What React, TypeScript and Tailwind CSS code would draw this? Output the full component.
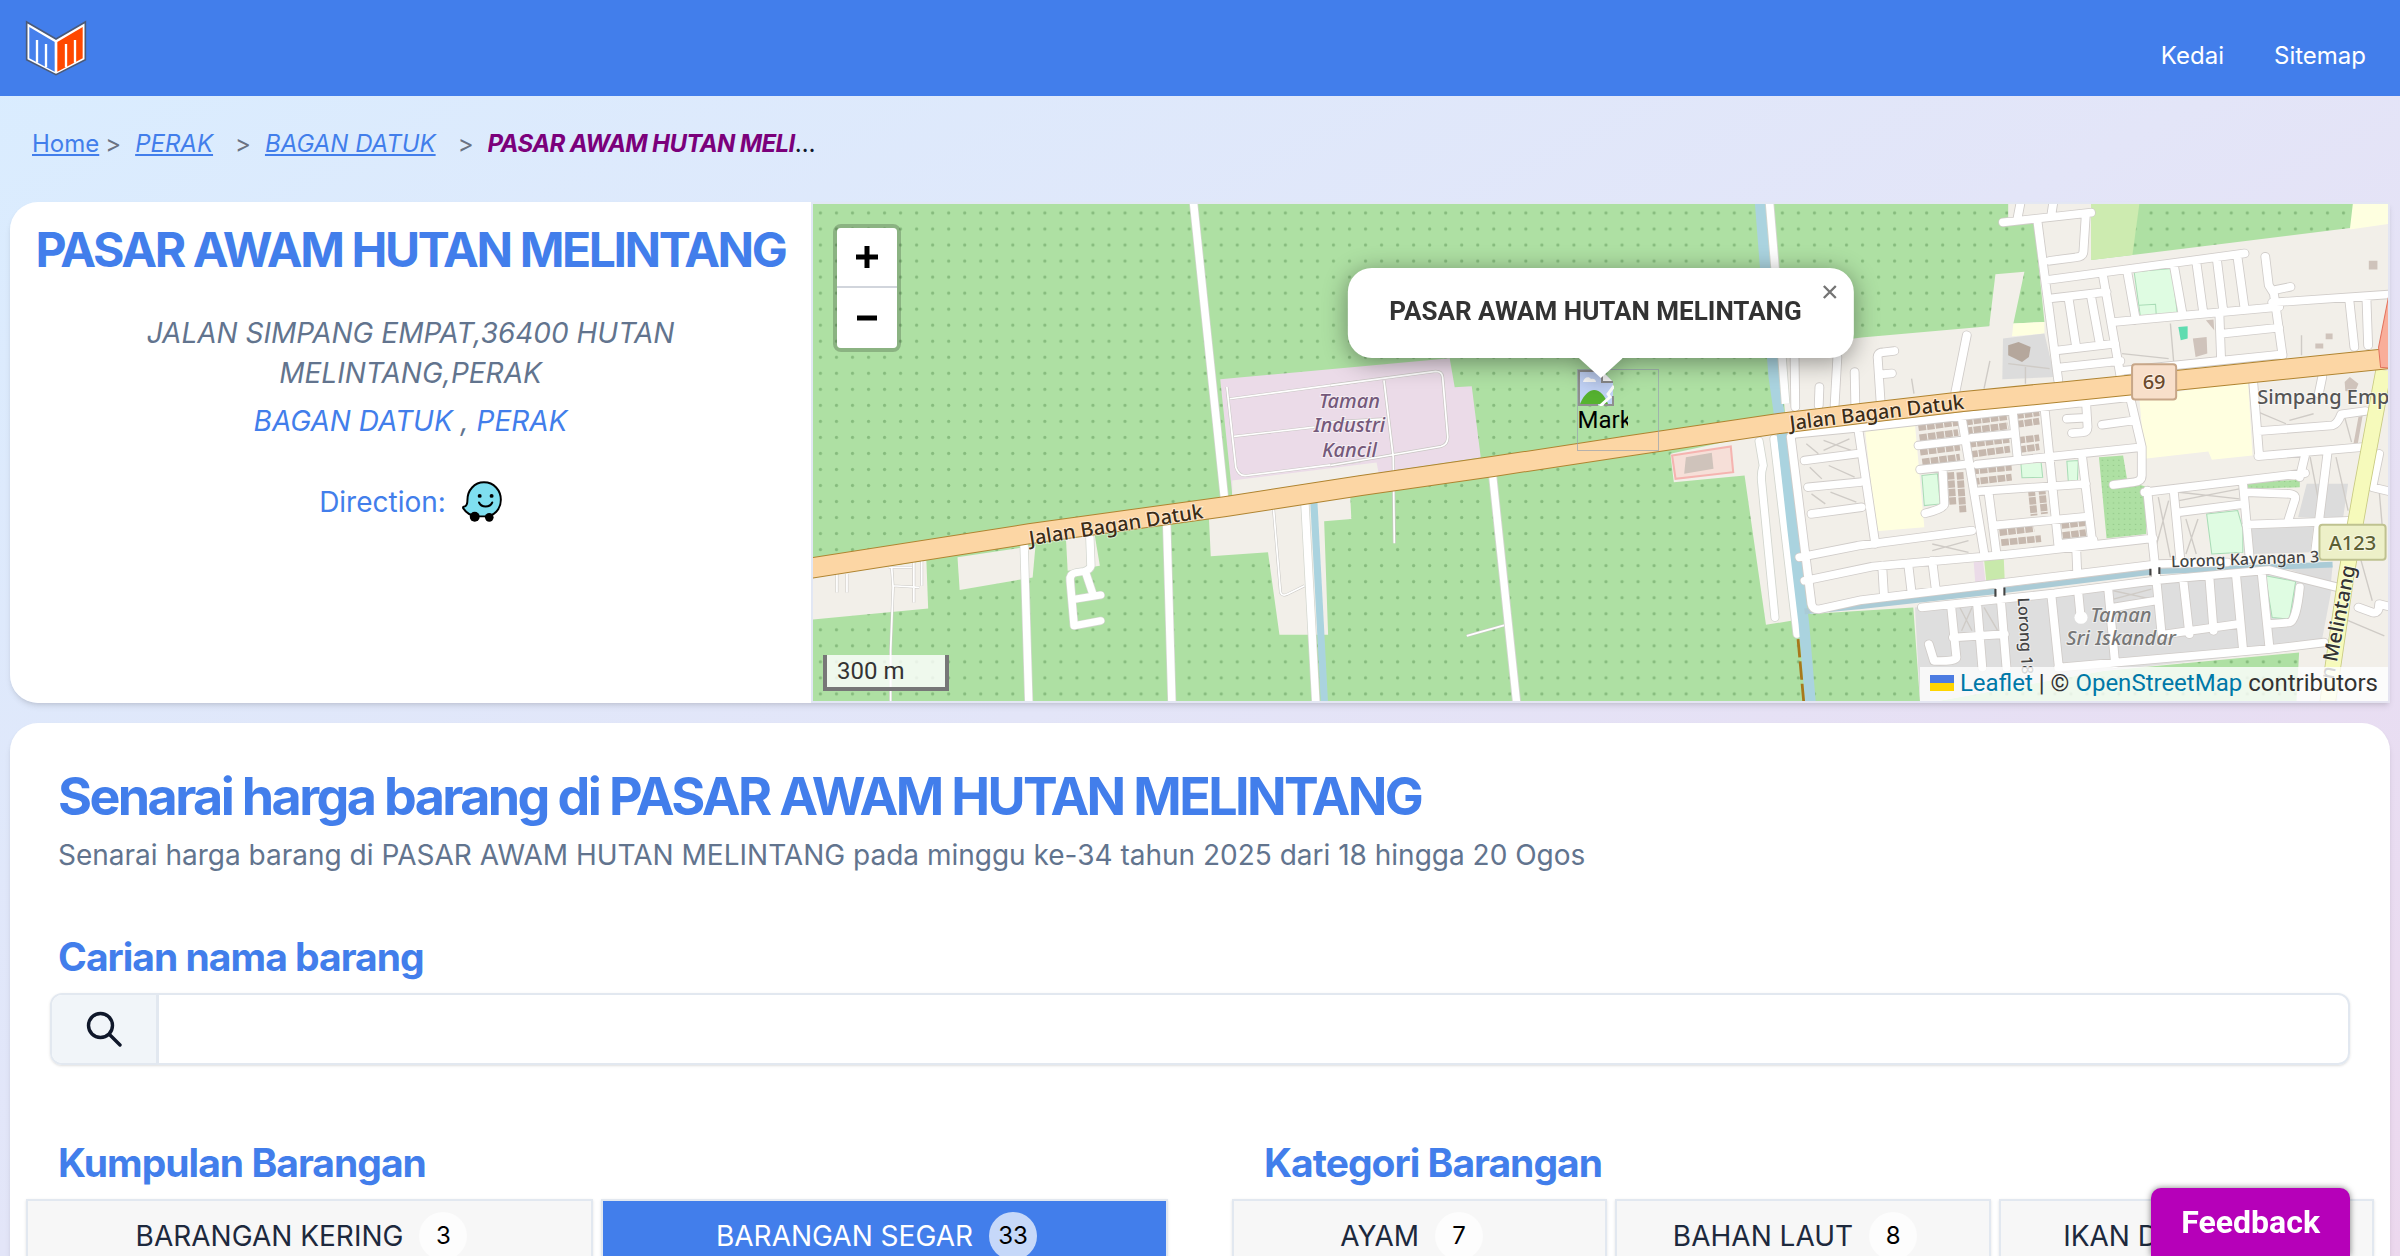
import React, { useState } from 'react';

type Tab = { label: string; count: number };

const groups: Tab[] = [
  { label: 'BARANGAN KERING', count: 3 },
  { label: 'BARANGAN SEGAR', count: 33 },
];

const categories: Tab[] = [
  { label: 'AYAM', count: 7 },
  { label: 'BAHAN LAUT', count: 8 },
  { label: 'IKAN DARAT', count: 4 },
];

function Logo() {
  return (
    <svg viewBox="0 0 270 216" className="h-[72px] w-[90px]" aria-hidden="true">
      <path d="M50 30 L138 81 L226 30 V143 L138 188 L50 143 Z" fill="#fff" stroke="#4b5a78" strokeWidth="5" />
      <path d="M58 45 L134 90 V179 L58 139 Z" fill="#4680ec" />
      <path d="M218 45 L142 90 V179 L218 139 Z" fill="#ff4800" />
      <path d="M81 152 V84 M108 166 V96" stroke="#fff" strokeWidth="7" fill="none" />
      <path d="M168 166 V96 M195 152 V84" stroke="#fff" strokeWidth="7" fill="none" />
    </svg>
  );
}

function WazeIcon() {
  return (
    <svg viewBox="0 0 120 124" className="h-[41px] w-10" aria-hidden="true">
      <path
        d="M66 4 C96 4 117 28 117 57 C117 86 96 107 68 107 H46 C28 106 12 96 3 82 C2 79 4 77 7 77 C15 76 16 69 16 57 C16 28 37 4 66 4 Z"
        fill="#7fdff0"
        stroke="#000"
        strokeWidth="6"
      />
      <circle cx="38" cy="108" r="15" />
      <circle cx="82" cy="110" r="13" />
      <circle cx="53" cy="45" r="6" />
      <circle cx="89" cy="45" r="6" />
      <path d="M51 65 C58 81 84 81 91 65" fill="none" stroke="#000" strokeWidth="6" strokeLinecap="round" />
    </svg>
  );
}

function BrokenImage() {
  return (
    <svg viewBox="0 0 36 36" className="h-9 w-9" aria-hidden="true">
      <path d="M1 1 H24 L35 12 V35 H1 Z" fill="#c3d4f8" />
      <path d="M5 12 C6 7 11 6 13 9 C16 8 18 10 18 12 Z" fill="#fff" />
      <path d="M2 34 C6 24 12 20 16 20 C22 20 27 26 30 34 Z" fill="#56b32f" />
      <path d="M24 1 V12 H35" fill="#fff" stroke="#8f8f8f" strokeWidth="2" />
      <path d="M24 1 H1 V35 H20 M26 35 H35 V26" fill="none" stroke="#8f8f8f" strokeWidth="2" />
      <path d="M36 16 L30 24 L32 27 L22 36" fill="none" stroke="#fff" strokeWidth="3" />
    </svg>
  );
}

// street grid of the town, drawn twice: casing first, then the white fill
const townStreets = [
  'M510 95 L570 570 M410 97 L665 68 M460 42 L452 85 M555 42 L550 75 M650 72 L643 185 Q642 200 620 202 L545 212',
  'M535 270 L1110 190 M700 258 L750 555 M545 325 L710 305 M600 325 L622 470 M665 318 L690 458 M570 480 L735 460',
  'M570 532 L750 512 M770 245 L795 390 M735 395 L1210 350 M1090 205 L1110 355 M905 225 L930 370 M970 215 L990 365',
  'M1030 210 L1048 360 M1037 370 L1042 510 M750 542 L1220 492 M1170 200 L1180 285 L1195 310 L1220 495 M1195 300 L1243 290',
  'M1190 337 L1540 312 M1045 430 L1210 412 M1413 325 L1428 470 M1463 320 L1468 465 M305 435 L272 605',
  'M55 630 L47 505 Q44 487 62 486 L95 482 M55 552 L88 549 M-194 500 L-192 650 M-70 500 L-78 645 M-122 590 L-124 645 M-20 545 L-18 640',
  'M-205 740 L-145 1240 Q-142 1256 -125 1256 L0 1228 L400 1178 L860 1120 L1060 1115',
  'M-190 730 L-10 712 L780 620 M-10 712 L40 1060 M290 680 L355 1085 M438 660 L452 800 M530 650 L570 1060 L672 1048',
  'M165 765 L290 750 M170 837 L300 822 M320 742 L440 730 M335 822 L795 772 M-10 1065 L320 1020 M-180 1100 L-10 1065',
  'M-165 1170 L30 1128 L420 1092 L845 1043 M368 905 L390 1082 M340 902 L650 880 M380 1005 L655 978 M640 805 L668 1050',
  'M235 835 L240 940 Q240 955 185 968 M60 1125 L65 1215 M135 1118 L145 1205 M205 1110 L215 1195 M622 1070 L625 1145',
  'M-165 810 L-15 790 M-155 890 L-5 875 M-145 970 L0 950',
  'M778 620 L812 770 L812 855 Q812 872 790 875 L730 883 M650 625 L655 710 Q655 725 640 726 L610 728 M595 685 L650 682 M697 703 L790 690',
  'M1135 575 L1152 795 M820 905 L1285 848 M1150 797 L1450 770 M1150 722 L1365 705 Q1380 700 1390 672 L1460 662 M1335 560 L1325 610',
  'M828 900 L850 1120 L870 1335 M905 905 L925 1120 M920 965 L1110 940 M1105 875 L1125 1105 M1115 905 L1240 910 Q1262 912 1255 930 L1235 995 M1115 1002 L1430 990',
  'M1285 795 L1270 860 M1350 790 L1315 1080 M1500 790 L1480 890 L1540 905 M1440 1250 L1480 1265 Q1500 1270 1500 1240 L1540 1250',
  'M175 1250 L560 1208 L860 1168 L1180 1138 L1380 1190 M260 1250 L275 1400 Q275 1412 210 1410 L195 1360 M335 1240 L350 1430 M400 1180 L420 1430',
  'M550 1212 L572 1430 M628 1205 L635 1280 M715 1195 L735 1420 M932 1165 L950 1330 M1008 1160 L1020 1320 M1085 1150 L1105 1370 M1160 1150 L1182 1370',
  'M265 1340 L415 1330 M730 1250 L850 1230 M570 1430 L1180 1375 L1340 1355 M870 1332 L1090 1300 M1180 1300 L1240 1295 Q1260 1290 1270 1190',
].join(' ');

const serviceWays =
  'M145 565 L152 610 M372 512 L355 595 M425 520 L545 535 M475 530 L475 580 M895 400 L905 520 M755 490 L890 505 M1275 435 L1275 495 ' +
  'M1400 1285 L1515 1335 M205 1060 L310 1085 M205 1080 L310 1050 M920 930 L1095 895 M920 905 L1095 925 M860 920 L895 1100 M890 930 L850 1080 ' +
  'M940 985 L970 1090 M975 985 L940 1090 M1150 665 L1230 700 M1240 690 L1310 670 M1300 800 L1330 960 M1375 800 L1410 960 M1400 680 L1420 755 ' +
  'M730 1200 L840 1225 M730 1225 L840 1195 M285 1250 L320 1320 M320 1250 L290 1320 M355 1250 L395 1320 M1500 900 L1515 1080 M1445 1100 L1480 1230 ' +
  'M-160 760 L-125 790 M-110 750 L-30 780 M-110 780 L-35 745 M-150 830 L-115 865 M-95 825 L-20 860 M-145 910 L-105 940 M-90 905 L-15 935';

const rowHouses =
  'M165 712 L280 696 M168 742 L280 726 M170 785 L285 770 M176 815 L285 800 M300 695 L425 678 M300 722 L425 706 M310 762 L428 747 ' +
  'M315 792 L430 776 M318 842 L435 830 M320 874 L435 860 M448 676 L515 667 M448 702 L515 692 M452 750 L515 742 M455 778 L515 769 ' +
  'M400 1026 L500 1014 M405 1056 L520 1044 M555 1008 L648 996 M558 1038 L650 1026 M258 845 L265 945 M285 845 L294 965 M492 895 L500 975 M522 890 L530 970';

const trunkRoad = 'M-10 365 L219 329 L414 302 L549 281 L681 262 L819 241 L967 219 L1049 209 L1152 197 L1245 188 L1393 173 L1577 154';

function MapCanvas() {
  return (
    <svg viewBox="0 0 1577 496" preserveAspectRatio="xMidYMid slice" className="block h-full w-full" role="img" aria-label="Map">
      <defs>
        <pattern id="orchard" width="16" height="16" patternUnits="userSpaceOnUse">
          <rect width="16" height="16" fill="#aee0a3" />
          <circle cx="10" cy="9" r="1.6" fill="#86bb7d" />
        </pattern>
      </defs>
      <rect width="1577" height="496" fill="url(#orchard)" />

      {/* industrial estate */}
      <path d="M409 175 L638 154 L643 183 L660 182 L669 253 L421 290 Z" fill="#ebdbe8" />
      <path d="M421 276 L565 258 L567 268 L421 291 Z" fill="#f2efe9" />

      {/* west */}
      <g transform="translate(-11 -14) scale(.357 .3333)">
        <g fill="#f2efe9">
          <path d="M0 1165 L355 1110 L360 1253 L0 1290 Z" />
          <path d="M442 1100 L660 1065 L652 1160 L448 1198 Z" />
          <path d="M745 1040 L825 1030 L840 1125 L750 1140 Z" />
          <path d="M1145 985 L1400 940 L1540 920 L1543 985 L1467 992 L1478 1332 L1342 1332 L1310 1085 L1150 1097 Z" />
        </g>
        <path d="M1438 930 L1468 1540" stroke="#aad3df" strokeWidth="20" />
        <g fill="none" stroke="#c9c7c4" strokeWidth="8">
          <path d="M250 1130 H315 M258 1130 L262 1190 L255 1380 V1540 M262 1185 L335 1190 M320 1115 V1235 M342 1110 V1185 M105 1150 V1205 M133 1150 V1205" />
          <path d="M1325 950 L1345 1205 Q1350 1218 1365 1210 L1412 1185 M1195 590 L1220 830 Q1228 858 1250 855 L1568 812 M1203 625 L1568 573 M1215 738 L1440 710" />
        </g>
        <g fill="none" stroke="#fff" strokeWidth="5">
          <path d="M250 1130 H315 M258 1130 L262 1190 L255 1380 V1540 M262 1185 L335 1190 M320 1115 V1235 M342 1110 V1185 M105 1150 V1205 M133 1150 V1205" />
          <path d="M1325 950 L1345 1205 Q1350 1218 1365 1210 L1412 1185 M1195 590 L1220 830 Q1228 858 1250 855 L1568 812 M1203 625 L1568 573 M1215 738 L1440 710" />
        </g>
        <g fill="none" strokeLinecap="round" strokeLinejoin="round">
          {['#d3d6cf', '#fff'].map((stroke, i) => (
            <g key={stroke} stroke={stroke} strokeWidth={i === 0 ? 25 : 21}>
              <path d="M1100 20 L1188 920 M628 1060 L642 1560 M1027 1005 L1042 1560 M1413 935 L1445 1560" />
              <path d="M812 1040 L815 1125 Q812 1138 795 1142 L772 1146 Q755 1150 757 1170 L768 1305 L842 1290 M800 1145 L822 1215 M765 1226 L842 1213" />
            </g>
          ))}
        </g>
      </g>

      {/* centre */}
      <g transform="translate(519 -14) scale(.3444 .3333)">
        <path d="M985 790 L1250 730 L1300 730 L1335 1290 L1262 1302 L1200 855 L995 875 Z" fill="#f2efe9" />
        <path d="M990 795 L1160 768 L1167 845 L1000 865 Z" fill="#f6dfd8" stroke="#f5b4b0" strokeWidth="6" />
        <path d="M1030 800 L1105 787 L1110 835 L1025 850 Z" fill="#cfc3bb" />
        <g fill="none" strokeLinejoin="round">
          {['#c9c7c4', '#fff'].map((stroke, i) => (
            <path
              key={stroke}
              stroke={stroke}
              strokeWidth={i === 0 ? 9 : 5}
              d="M0 585 L305 543 Q323 543 325 560 L340 740 Q340 763 320 768 L0 825 M155 570 L182 800 L185 1058 M0 695 L160 685 M395 1335 L505 1303"
            />
          ))}
        </g>
        <g fill="none" strokeLinecap="round">
          {['#d3d6cf', '#fff'].map((stroke, i) => (
            <g key={stroke} stroke={stroke} strokeWidth={i === 0 ? 26 : 21}>
              <path d="M470 855 L542 1560 M1242 752 L1254 825 Q1246 850 1250 880 L1288 1280 M1285 745 L1352 1330" />
            </g>
          ))}
        </g>
      </g>

      {/* town */}
      <g transform="translate(1049 -14) scale(.3444 .3333)">
        <path
          d="M-239 475 L0 442 L370 408 L388 252 L472 245 L440 400 L530 395 L500 90 L425 90 L425 42 L665 42 L665 210 L785 195 L1540 98 V1540 H1260 L1268 1385 L700 1440 L170 1540 L150 1250 L-150 1270 L-215 740 Z"
          fill="#f2efe9"
        />
        <path d="M665 42 L805 42 L785 195 L665 210 Z" fill="#cdebb0" />
        <path d="M440 400 L530 395 V430 L436 438 Z M1425 30 H1540 V100 L1415 118 Z" fill="#feffe0" />
        <path d="M155 1250 L860 1170 L1200 1130 L1365 1180 L1330 1370 L700 1440 L170 1540 Z" fill="#dedede" />
        <path d="M410 445 L530 430 L560 560 L408 567 Z M1128 1010 L1310 1005 L1300 1085 L1135 1090 Z M1290 880 L1410 880 L1395 985 L1265 980 Z M1220 1130 L1365 1125 L1360 1178 Z" fill="#dcdcdc" />
        <path d="M425 465 L455 455 L490 470 L485 500 L465 515 L425 495 Z" fill="#b5a79c" />
        <path d="M10 715 L155 703 L182 1010 L42 1022 Z M805 622 L1120 572 L1133 795 L1015 808 L1005 783 L820 805 Z" fill="#ffffe0" />
        <g fill="#dffce2" stroke="#a9dcb6" strokeWidth="3">
          <path d="M790 245 L900 235 L915 370 L808 378 Z M805 345 L852 342 L854 374" />
          <path d="M1000 970 L1090 960 L1105 1015 V1085 L1015 1090 Z M1170 1155 L1258 1172 L1240 1285 L1190 1280 Z" />
          <path d="M175 855 L220 850 L228 940 L182 945 Z M462 820 L520 812 L525 860 L465 862 Z M595 812 L628 810 L625 885 L600 885 Z" />
        </g>
        <path d="M688 800 L758 795 L770 870 L822 888 L825 1030 L710 1043 Z M1115 875 L1270 868 V890 L1120 895 Z" fill="url(#orchard)" />
        <path d="M355 1105 L412 1100 L415 1170 L362 1175 Z" fill="#c8e9ab" />
        <path d="M325 1115 L352 1112 L360 1180 L330 1180 Z" fill="#ebdbe8" />
        <path d="M918 410 L945 408 V445 L925 450 Z" fill="#5fdcb0" />
        <path d="M960 445 L1000 440 L1002 490 L968 500 Z M998 390 L1020 388 L1022 420 Z M1470 212 H1495 V238 H1470 Z M1345 430 H1365 V447 H1345 Z M1315 460 H1338 V475 H1315 Z M1400 575 L1415 560 L1440 580 L1430 605 L1402 602 Z M1440 680 L1452 676 L1438 760 L1426 758 Z" fill="#cfc3bb" />

        {/* canal */}
        <path d="M-295 20 L-254 560 L-229 740 L-199 1020 L-167 1300 L-146 1560" fill="none" stroke="#aad3df" strokeWidth="31" />
        <path d="M-165 1262 L0 1246 L385 1202 L850 1142 L1365 1122" fill="none" stroke="#aacbd6" strokeWidth="17" />
        <path d="M-268 20 L-250 240 L-220 640" fill="none" stroke="#d3d6cf" strokeWidth="27" />
        <path d="M-268 20 L-250 240 L-220 640" fill="none" stroke="#fff" strokeWidth="22" />
        <path d="M-184 1345 L-166 1550" stroke="#a8781c" strokeWidth="8" strokeDasharray="55 12" />

        <path d={rowHouses} fill="none" stroke="#c6b8ae" strokeWidth="20" strokeDasharray="22 3" />
        <path d={serviceWays} fill="none" stroke="#cfcbc6" strokeWidth="4" />
        <path d={townStreets} fill="none" stroke="#d0ccc9" strokeWidth="28" strokeLinecap="round" strokeLinejoin="round" />
        <path d={townStreets} fill="none" stroke="#fff" strokeWidth="23" strokeLinecap="round" strokeLinejoin="round" />
        <circle cx="636" cy="1280" r="19" fill="#fff" />
        <path d="M388 1195 V1218 M414 1190 V1214 M837 1134 V1154 M863 1130 V1150" stroke="#444" strokeWidth="6" />

        {/* secondary road */}
        <path d="M1513 540 L1448 900 L1405 1150 L1350 1540" fill="none" stroke="#c9cb83" strokeWidth="48" />
        <path d="M1513 540 L1448 900 L1405 1150 L1350 1540" fill="none" stroke="#f6fabb" strokeWidth="43" />
      </g>

      <path d={trunkRoad} fill="none" stroke="#b08430" strokeWidth="21" />
      <path d={trunkRoad} fill="none" stroke="#fcd6a4" strokeWidth="19" />
      <path d="M1577 82 L1565 143 L1567 163 L1577 164 Z" fill="#f9ae9a" stroke="#e2735e" />

      <rect x="1319" y="160" width="44" height="35" rx="3" fill="#f8dfca" stroke="#c7a688" strokeWidth="2" />
      <rect x="1506" y="320" width="66" height="35" rx="3" fill="#edf0c8" stroke="#bfc290" strokeWidth="2" />

      <g className="font-['Noto_Sans',sans-serif] font-medium" stroke="#fff" strokeOpacity="0.5" strokeWidth="2" paintOrder="stroke">
        <g textAnchor="middle" fontSize="20">
          <g fill="#74597a" fontStyle="italic">
            <text x="538" y="204">Taman</text>
            <text x="538" y="228">Industri</text>
            <text x="538" y="252">Kancil</text>
          </g>
          <g fill="#777" fontStyle="italic">
            <text x="1308" y="417">Taman</text>
            <text x="1308" y="440">Sri Iskandar</text>
          </g>
          <text x="1341" y="185" fill="#6b4a2c">69</text>
          <text x="1539" y="345" fill="#5c6034">A123</text>
          <text transform="translate(306 327) rotate(-9)" fill="#3b2c17" fontSize="20">Jalan Bagan Datuk</text>
          <text transform="translate(1065 215) rotate(-7)" fill="#3b2c17" fontSize="20">Jalan Bagan Datuk</text>
          <text transform="translate(1432 360) rotate(-2)" fill="#444" fontSize="16">Lorong Kayangan 3</text>
        </g>
        <text x="1444" y="200" fill="#555" fontSize="20">Simpang Emp</text>
        <text transform="translate(1205 393) rotate(87)" fill="#444" fontSize="16">Lorong 18</text>
        <text transform="translate(1520 475) rotate(-79)" fill="#333" fontSize="20">n Melintang</text>
      </g>
    </svg>
  );
}

function MarketMap() {
  const [popupOpen, setPopupOpen] = useState<boolean>(true);

  return (
    <div className="relative min-w-0 flex-1 overflow-hidden border-2 border-slate-200/60 font-[Roboto,sans-serif]">
      <MapCanvas />

      <div className="absolute top-5 left-5 flex flex-col overflow-hidden rounded-lg border-4 border-black/20 bg-clip-padding">
        <button type="button" aria-label="Zoom in" className="flex h-15 w-15 items-center justify-center border-b-2 border-gray-300 bg-white">
          <svg viewBox="0 0 22 22" className="h-[22px] w-[22px]"><path d="M11 0 V22 M0 11 H22" stroke="#000" strokeWidth="5" /></svg>
        </button>
        <button type="button" aria-label="Zoom out" className="flex h-15 w-15 items-center justify-center bg-white">
          <svg viewBox="0 0 20 20" className="h-5 w-5"><path d="M0 10 H20" stroke="#000" strokeWidth="5" /></svg>
        </button>
      </div>

      {/* marker whose picture did not load */}
      <div className="absolute top-[165px] left-1/2 h-[82px] w-[82px] -translate-x-6 border border-gray-400/70">
        <div className="flex w-[50px] flex-col overflow-hidden text-2xl leading-7 text-black">
          <BrokenImage />
          Mark
        </div>
      </div>

      {popupOpen ? (
        <div className="absolute top-16 left-1/2 -translate-x-1/2 drop-shadow-[0_4px_12px_rgba(0,0,0,0.4)]">
          <div className="flex h-[90px] items-center rounded-3xl bg-white pr-[52px] pb-1 pl-[42px] text-[26px] font-bold whitespace-nowrap text-[#333]">
            PASAR AWAM HUTAN MELINTANG
          </div>
          <svg viewBox="0 0 44 20" className="mx-auto block h-5 w-11" aria-hidden="true"><path d="M0 0 H44 L22 20 Z" fill="#fff" /></svg>
          <button
            type="button"
            aria-label="Close popup"
            onClick={() => setPopupOpen(false)}
            className="absolute top-0 right-0 flex h-12 w-12 items-center justify-center"
          >
            <svg viewBox="0 0 14 14" className="h-3.5 w-3.5"><path d="M1 1 L13 13 M13 1 L1 13" stroke="#757575" strokeWidth="2.4" /></svg>
          </button>
        </div>
      ) : null}

      <div className="absolute bottom-2.5 left-2.5 h-9 w-[126px] border-4 border-t-0 border-[#777] bg-white/80 pl-2.5 text-2xl leading-8 text-[#333]">300 m</div>

      <div className="absolute right-0 bottom-0 flex h-[34px] items-center bg-white/80 px-2.5 pb-0.5 text-2xl text-[#333]">
        <svg viewBox="0 0 24 16" className="mr-1.5 h-4 w-6" aria-hidden="true">
          <path d="M0 0 H24 V8 H0 Z" fill="#4c7be1" />
          <path d="M0 8 H24 V16 H0 Z" fill="#ffd500" />
        </svg>
        <p className="whitespace-pre">
          <a href="#leaflet" className="text-[#0078a8]">Leaflet</a> | © <a href="#osm" className="text-[#0078a8]">OpenStreetMap</a> contributors
        </p>
      </div>
    </div>
  );
}

function TabList({ title, tabs, active, onSelect, columns }: {
  title: string;
  tabs: Tab[];
  active?: string;
  onSelect: (label: string) => void;
  columns: string;
}) {
  return (
    <section>
      <h3 className="px-8 text-[39px] leading-[56px] font-bold tracking-tight text-[#427eeb]">{title}</h3>
      <div className={`mt-2 grid gap-2 ${columns}`}>
        {tabs.map((tab) => (
          <button
            key={tab.label}
            type="button"
            onClick={() => onSelect(tab.label)}
            className={`flex h-[74px] items-center justify-center border-2 border-slate-200 text-[28px] whitespace-nowrap shadow-sm ${
              tab.label === active ? 'bg-[#427eeb] text-white' : 'bg-[#f7f7f7] text-slate-800'
            }`}
          >
            {tab.label}
            <span className="mx-4 flex h-12 w-12 items-center justify-center rounded-full bg-white/70 text-2xl text-black">{tab.count}</span>
          </button>
        ))}
      </div>
    </section>
  );
}

export default function App() {
  const [group, setGroup] = useState<string>('BARANGAN SEGAR');
  const [category, setCategory] = useState<string>('');

  return (
    <div className="h-screen overflow-hidden bg-linear-to-br from-[#d9edff] via-[#e3e5f8] to-[#ecd8ee] font-[Inter,sans-serif]">
      <header className="flex h-24 items-center justify-between bg-[#427eeb] pr-[34px] pl-2.5">
        <a href="#home" aria-label="Home"><Logo /></a>
        <nav className="flex gap-[50px] pt-4 text-2xl text-white">
          <a href="#kedai">Kedai</a>
          <a href="#sitemap">Sitemap</a>
        </nav>
      </header>

      <nav aria-label="Breadcrumb" className="flex items-center px-8 pt-[30px] pb-10 text-2xl leading-9 text-[#427eeb]">
        <a href="#home" className="underline">Home</a>
        <span className="pr-3.5 pl-1.5 text-gray-500">&gt;</span>
        <a href="#perak" className="italic underline">PERAK</a>
        <span className="pr-3.5 pl-[22px] text-gray-500">&gt;</span>
        <a href="#bagan-datuk" className="italic underline">BAGAN DATUK</a>
        <span className="pr-3.5 pl-[22px] text-gray-500">&gt;</span>
        <p className="w-[332px] truncate tracking-tight text-slate-900">
          <em className="font-bold text-[#7b007b]">PASAR AWAM HUTAN MELINTANG</em>
        </p>
      </nav>

      <main className="px-2.5">
        <div className="flex h-[501px] rounded-l-[28px] shadow-md">
          <section className="w-[801px] shrink-0 rounded-l-[28px] bg-white pt-4 text-center text-[28px] leading-10 text-slate-500">
            <h1 className="text-[48px] leading-[64px] font-bold tracking-tighter text-[#427eeb]">PASAR AWAM HUTAN MELINTANG</h1>
            <address className="mt-[31px] px-24">
              <p>JALAN SIMPANG EMPAT,36400 HUTAN MELINTANG,PERAK</p>
              <p className="mt-2">
                <a href="#bagan-datuk" className="text-[#427eeb]">BAGAN DATUK</a> , <a href="#perak" className="text-[#427eeb]">PERAK</a>
              </p>
            </address>
            <a href="#waze" className="mt-10 flex items-center justify-center gap-4 text-[#427eeb]">
              Direction: <WazeIcon />
            </a>
          </section>
          <MarketMap />
        </div>

        <div className="mt-5 h-[600px] rounded-t-[28px] bg-white px-4 pt-10 shadow-md">
          <h2 className="px-8 text-[52px] leading-[68px] font-bold tracking-tighter text-[#427eeb]">
            Senarai harga barang di PASAR AWAM HUTAN MELINTANG
          </h2>
          <p className="mt-1 px-8 text-[28px] leading-10 text-slate-500">
            Senarai harga barang di PASAR AWAM HUTAN MELINTANG pada minggu ke-34 tahun 2025 dari 18 hingga 20 Ogos
          </p>

          <form className="mt-[54px] px-6" onSubmit={(e) => e.preventDefault()}>
            <label htmlFor="search" className="block px-2 text-[39px] leading-[56px] font-bold tracking-tight text-[#427eeb]">
              Carian nama barang
            </label>
            <div className="mt-2 flex h-[72px] overflow-hidden rounded-xl border-2 border-slate-200 shadow-sm">
              <button type="submit" aria-label="Cari" className="flex w-[107px] items-center justify-center border-r-3 border-slate-200 bg-slate-100">
                <svg viewBox="0 0 36 36" className="h-9 w-9" fill="none" stroke="#0f172a" strokeWidth="3.4" strokeLinecap="round" aria-hidden="true">
                  <circle cx="14.5" cy="14.5" r="12" />
                  <path d="M23.5 23.5 L34 34" />
                </svg>
              </button>
              <input id="search" type="text" className="min-w-0 flex-1 px-4 text-[28px] outline-none" />
            </div>
          </form>

          <div className="mt-[70px] grid grid-cols-2 gap-16">
            <TabList title="Kumpulan Barangan" tabs={groups} active={group} onSelect={setGroup} columns="grid-cols-2" />
            <TabList title="Kategori Barangan" tabs={categories} active={category} onSelect={setCategory} columns="grid-cols-3" />
          </div>
        </div>
      </main>

      <button
        type="button"
        className="fixed right-[50px] bottom-0 h-17 rounded-t-[10px] bg-[#b600b9] px-[30px] font-[Roboto,sans-serif] text-[32px] leading-none font-bold text-white shadow-[0_0_6px_rgba(0,0,0,0.5)]"
      >
        Feedback
      </button>
    </div>
  );
}
